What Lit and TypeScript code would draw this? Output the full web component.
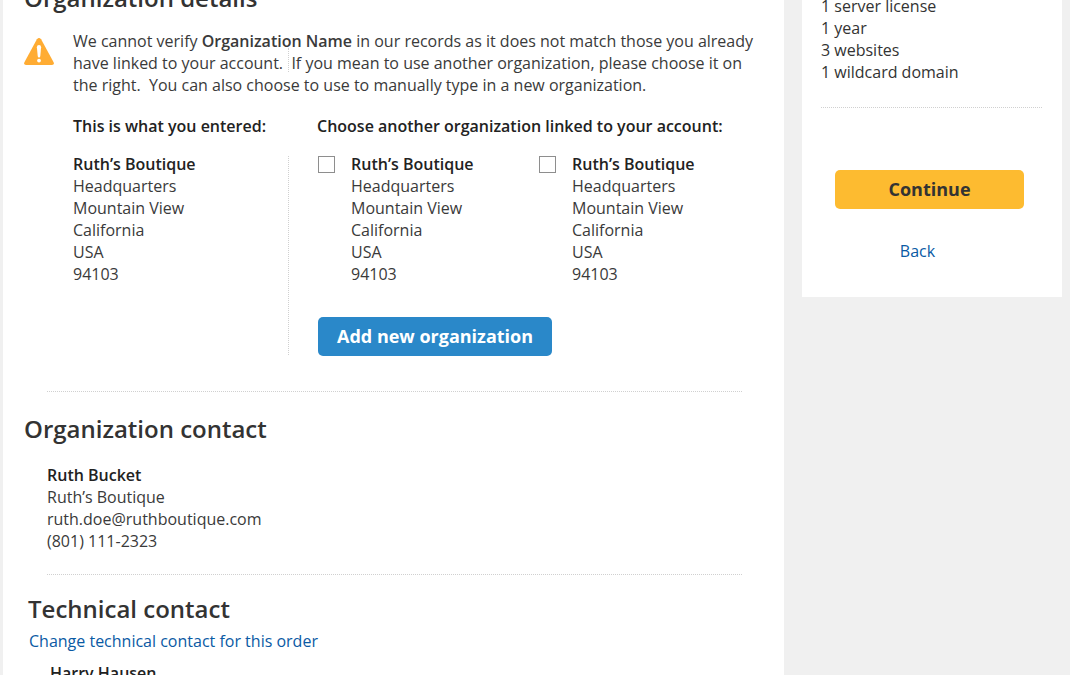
import { LitElement, html, css } from "lit";
import { customElement } from "lit/decorators.js";

const ADDRESS = {
  name: "Ruth’s Boutique",
  lines: ["Headquarters", "Mountain View", "California", "USA", "94103"],
};

@customElement("app-root")
export class AppRoot extends LitElement {
  static styles = css`
    :host {
      display: block;
      height: 100vh;
      overflow: hidden;
      background: #f0f0f0;
      color: #3a3a3a;
      font-family: "Open Sans", "Noto Sans", sans-serif;
      font-size: 16px;
      line-height: 22px;
    }
    * {
      box-sizing: border-box;
    }
    h2,
    h3,
    p,
    ul {
      margin: 0;
      padding: 0;
    }
    ul {
      list-style: none;
    }
    a {
      color: #0a5aa4;
      text-decoration: none;
    }
    a:hover {
      text-decoration: underline;
    }
    .page {
      display: grid;
      grid-template-columns: minmax(0, 1fr) 260px;
      gap: 18px;
      align-items: start;
      padding: 0 8px 0 3px;
    }
    .main {
      background: #fff;
      min-height: 100vh;
      padding: 0 25px 20px 21px;
    }
    .title {
      font-size: 24px;
      line-height: 32px;
      font-weight: 600;
      color: #333;
    }
    .details .title {
      margin-top: -18px;
    }
    .notice {
      display: grid;
      grid-template-columns: 30px minmax(0, 1fr);
      gap: 19px;
      padding-top: 16px;
    }
    .warning {
      display: block;
      width: 30px;
      height: 28px;
      margin-top: 8px;
    }
    .message {
      position: relative;
    }
    .tick {
      position: absolute;
      left: 215px;
      top: 18px;
      height: 24px;
      border-left: 1px dotted #d0d0d0;
    }
    .strong,
    strong {
      font-weight: 600;
    }
    .strong {
      font-size: 16px;
      line-height: 22px;
      color: #222;
    }
    .choices {
      display: grid;
      grid-template-columns: 215px minmax(0, 1fr);
      padding: 19px 0 0 49px;
      row-gap: 16px;
    }
    .choices .alt {
      padding-left: 29px;
    }
    .divided {
      border-left: 1px dotted #d0d0d0;
      margin-top: 3px;
      height: 199px;
    }
    .options {
      display: grid;
      grid-template-columns: repeat(2, 221px);
      margin-top: -3px;
    }
    .option {
      display: flex;
      gap: 16px;
    }
    .check {
      appearance: none;
      flex: none;
      width: 17px;
      height: 17px;
      margin: 3px 0 0;
      border: 1px solid #8e8e8e;
      border-radius: 0;
      background: #fff;
    }
    .check:checked {
      background: #2a88c9;
      box-shadow: inset 0 0 0 3px #fff;
    }
    .btn {
      display: block;
      border: 0;
      border-radius: 5px;
      font-family: inherit;
      font-size: 18px;
      line-height: 24px;
      font-weight: 700;
      padding: 7px 19px 8px;
      cursor: pointer;
    }
    .add {
      margin-top: 32px;
      background: #2a88c9;
      color: #fff;
    }
    .next {
      width: 100%;
      background: #fdbb30;
      color: #333;
    }
    .rule {
      border: 0;
      border-top: 1px dotted #d0d0d0;
      margin: 0;
    }
    .main .rule {
      margin: 0 17px 0 23px;
    }
    .details .rule {
      margin-top: 36px;
    }
    .contact .title {
      padding-top: 21px;
    }
    .contact .person {
      padding: 19px 0 22px 23px;
    }
    .technical {
      padding: 18px 0 0 4px;
    }
    .technical .change {
      display: inline-block;
      padding: 5px 0 0 1px;
    }
    .technical .person {
      padding: 10px 0 0 22px;
    }
    .side {
      background: #fff;
      padding: 0 20px 35px 19px;
    }
    .summary {
      margin-top: -5px;
      color: #333;
    }
    .side .rule {
      margin-top: 24px;
    }
    .actions {
      display: grid;
      justify-items: center;
      gap: 31px;
      padding: 62px 18px 0 14px;
    }
    .back {
      margin-right: 24px;
    }
  `;

  private address() {
    return html`<div>
      <p class="strong">${ADDRESS.name}</p>
      ${ADDRESS.lines.map((line) => html`<p>${line}</p>`)}
    </div>`;
  }

  private option(id: string) {
    return html`<div class="option">
      <input class="check" type="checkbox" id=${id} />
      <label for=${id}>${this.address()}</label>
    </div>`;
  }

  render() {
    return html`
      <div class="page">
        <main class="main">
          <section class="details">
            <h2 class="title">Organization details</h2>
            <div class="notice">
              <svg class="warning" viewBox="0 0 30 28" aria-hidden="true">
                <path
                  fill="#ffac33"
                  d="M12.9 1.3Q15-1.4 17.1 1.3L29.6 24.3Q30.6 27 28 27H2Q-.6 27 .4 24.3Z"
                />
                <path
                  fill="#fff"
                  d="M12.9 9.2Q12.9 7 15 7T17.1 9.2L16.3 18Q16.1 19.5 15 19.5T13.7 18Z"
                />
                <circle cx="15" cy="22.6" r="1.9" fill="#fff" />
              </svg>
              <p class="message">
                We cannot verify <strong>Organization Name</strong> in our
                records as it does not match those you already have linked to
                your account.&nbsp; If you mean to use another organization,
                please choose it on the right.&nbsp; You can also choose to use
                to manually type in a new organization.
                <span class="tick"></span>
              </p>
            </div>
            <div class="choices">
              <h3 class="strong">This is what you entered:</h3>
              <h3 class="strong alt">
                Choose another organization linked to your account:
              </h3>
              ${this.address()}
              <div class="divided alt">
                <div class="options">
                  ${this.option("org-1")} ${this.option("org-2")}
                </div>
                <button class="btn add" type="button">
                  Add new organization
                </button>
              </div>
            </div>
            <hr class="rule" />
          </section>
          <section class="contact">
            <h2 class="title">Organization contact</h2>
            <div class="person">
              <p class="strong">Ruth Bucket</p>
              <p>Ruth’s Boutique</p>
              <p>ruth.doe@ruthboutique.com</p>
              <p>(801) 111-2323</p>
            </div>
            <hr class="rule" />
          </section>
          <section class="technical">
            <h2 class="title">Technical contact</h2>
            <a class="change" href="#technical"
              >Change technical contact for this order</a
            >
            <div class="person">
              <p class="strong">Harry Hausen</p>
            </div>
          </section>
        </main>
        <aside class="side">
          <ul class="summary">
            <li>1 server license</li>
            <li>1 year</li>
            <li>3 websites</li>
            <li>1 wildcard domain</li>
          </ul>
          <hr class="rule" />
          <div class="actions">
            <button class="btn next" type="button">Continue</button>
            <a class="back" href="#back">Back</a>
          </div>
        </aside>
      </div>
    `;
  }
}
